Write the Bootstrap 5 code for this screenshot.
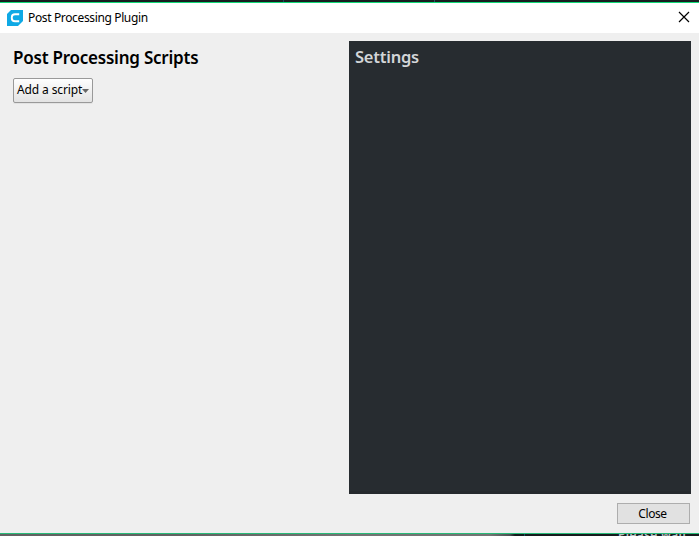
<!DOCTYPE html>
<html lang="en">
<head>
<meta charset="utf-8">
<meta name="viewport" content="width=device-width, initial-scale=1">
<title>Post Processing Plugin</title>
<link href="https://cdn.jsdelivr.net/npm/bootstrap@5.3.0/dist/css/bootstrap.min.css" rel="stylesheet">
<style>
body{height:536px;background:#efefef;color:#000;font-family:"Noto Sans","Open Sans",sans-serif;font-size:12px;line-height:16px}
.edge-top{height:3px;background:linear-gradient(90deg,transparent 283px,#174b5b 283px 284px,transparent 284px 434px,#2a5361 434px 435px,transparent 435px),#181e20;border-bottom:1px solid #12da78}
.titlebar{height:30px;padding:0 8px 0 7px}
.titlebar .caption{font-size:12px;margin-left:5px;letter-spacing:-.36px}
.workspace{padding:8px 8px 0 13px}
.heading{font-size:17px;line-height:22px;font-weight:600;margin:6px 0 0;letter-spacing:-.23px}
.script-btn{width:80px;height:25px;margin-top:9px;padding:0 3px 2px;font-size:12px;line-height:16px;letter-spacing:-.12px;color:#000;border:1px solid #999;border-radius:2px;background:linear-gradient(#fefefe,#e3e3e3);box-shadow:0 1px 0 #e2e2e2}
.script-btn svg{margin-top:3px}
.settings-pane{width:342px;height:453px;background:#272c30;border-bottom:3px solid #25292d;padding:5px 6px}
.settings-pane .heading{color:#d3d6d8;margin:0;font-weight:600;font-size:16.5px}
.bottom-bar{height:39px;padding:9px 9px 0 0}
.close-btn{width:73px;height:21px;padding:1px 2px 0 0;border:1px solid #adadad;border-radius:0;background:#e1e1e1;color:#000;font-size:12px;line-height:18px;letter-spacing:-.4px}
.edge-bottom{height:3px;border-top:1px solid #27bb78;background:linear-gradient(90deg,#626262 0 180px,#747474 350px 490px,#4b5052 510px,#151b1d 515px 524px,#175263 524px 525px,#171c1e 525px)}
.backdrop-label{margin-left:618px;margin-top:-6px;width:80px;color:#b8bec2;font-size:12px;font-weight:600;letter-spacing:.3px;line-height:14px;white-space:nowrap}
</style>
<script src="https://cdn.jsdelivr.net/npm/bootstrap@5.3.0/dist/js/bootstrap.bundle.min.js"></script>
</head>
<body class="d-flex flex-column overflow-hidden">
<div class="edge-top flex-shrink-0"></div>
<header class="titlebar d-flex align-items-center bg-white flex-shrink-0">
  <svg width="16" height="16" viewBox="0 0 16 16" aria-hidden="true"><path d="M4 0H16V11L11 16H0V4Z" fill="#0fa9e5"/><path d="M12.2 4.3H8Q4.8 4.3 4.8 7.2V8.2Q4.8 11.2 8 11.2H12.2" fill="none" stroke="#fff" stroke-width="1.9"/></svg>
  <span class="caption">Post Processing Plugin</span>
  <svg class="ms-auto" width="14" height="14" viewBox="0 0 14 14" aria-label="Close window"><path d="M2 1L12 11M12 1L2 11" stroke="#000" stroke-width="1.2" fill="none"/></svg>
</header>
<main class="workspace d-flex justify-content-between flex-shrink-0">
  <section>
    <h1 class="heading">Post Processing Scripts</h1>
    <button class="btn script-btn d-flex align-items-center justify-content-between" type="button"><span class="text-nowrap">Add a script</span><svg class="flex-shrink-0" width="7" height="4" viewBox="0 0 7 4" aria-hidden="true"><path d="M0 0H7L3.5 4Z" fill="#666"/></svg></button>
  </section>
  <section class="settings-pane"><h2 class="heading">Settings</h2></section>
</main>
<footer class="bottom-bar d-flex justify-content-end align-items-start flex-shrink-0"><button type="button" class="btn close-btn">Close</button></footer>
<div class="edge-bottom overflow-hidden flex-shrink-0"><div class="backdrop-label">Please wait</div></div>
</body>
</html>
